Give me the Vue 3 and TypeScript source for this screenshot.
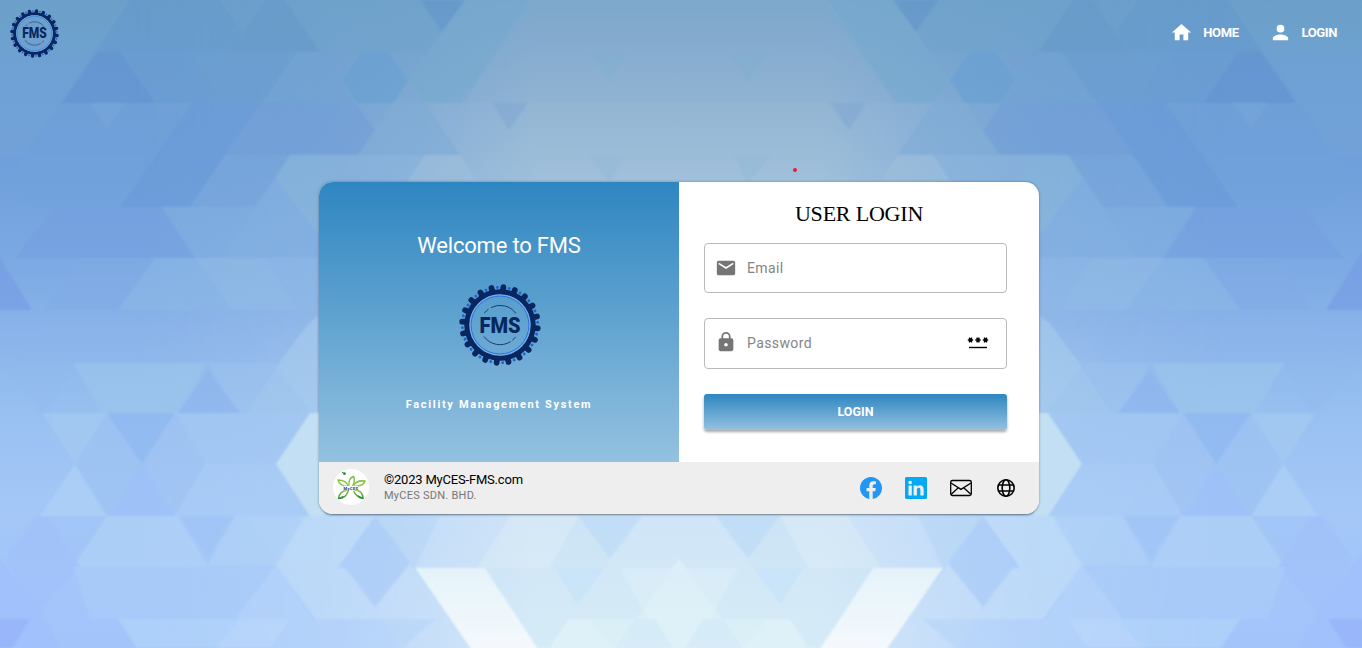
<script setup lang="ts">
import { ref } from 'vue'

interface Facet {
  p: string
  c: string
}

// Left half of the faceted backdrop; the right half is its mirror image.
const facets: Facet[] = [
  { p: '-10,0 130,0 25,155 -10,155', c: '#7ab4ca44' },
  { p: '-10,52 97,52 25,155 -10,155', c: '#6c9cda55' },
  { p: '130,0 220,0 243,35 232,52 97,52', c: '#5e96cb66' },
  { p: '220,0 265,0 243,35', c: '#6ca0cd' },
  { p: '265,0 285,0 320,52 232,52', c: '#6699c9' },
  { p: '285,0 420,0 442,32 428,52 320,52', c: '#6fa4cb' },
  { p: '420,0 465,0 442,32', c: '#6095ca' },
  { p: '465,0 535,0 462,103 425,103 408,80', c: '#78aacf' },
  { p: '408,80 465,0 428,52 388,52', c: '#75a6d0' },
  { p: '97,52 120,52 155,103 62,103', c: '#6292d0' },
  { p: '120,52 190,52 222,103 155,103', c: '#6a9cd2' },
  { p: '190,52 297,52 262,103 222,103', c: '#6b9dd0' },
  { p: '297,52 320,52 355,103 262,103', c: '#71a4d3' },
  { p: '362,52 388,52 408,80 393,103 357,103 342,80', c: '#66a0d2' },
  { p: '90,103 125,103 107,129', c: '#76a7d8' },
  { p: '125,103 193,103 167,140 107,129', c: '#70a1d7' },
  { p: '193,103 260,103 190,207 120,207', c: '#6a9ad9' },
  { p: '260,103 355,103 375,130 358,155 225,155', c: '#719fd7' },
  { p: '375,130 393,103 425,103 460,155 358,155', c: '#80add6' },
  { p: '425,103 690,103 690,182 478,182', c: '#9abbd755' },
  { p: '492,103 528,103 509,130', c: '#81a8d4' },
  { p: '590,52 628,52 610,82', c: '#80aed0' },
  { p: '587,155 625,155 610,182', c: '#93b8d7' },
  { p: '225,155 260,155 275,178 255,207 190,207', c: '#77a6dc' },
  { p: '260,155 290,155 275,178', c: '#76a6d8' },
  { p: '290,155 360,155 342,182 318,235 275,178', c: '#8ab8da' },
  { p: '327,155 425,155 407,182 342,182', c: '#8cb5dc' },
  { p: '425,155 460,155 478,182 407,182', c: '#9ec1db' },
  { p: '5,180 25,155 150,155 120,207 30,207', c: '#70a3dc66' },
  { p: '55,207 162,207 195,258 15,258', c: '#75a1e0' },
  { p: '162,207 255,207 220,258 195,258', c: '#80afe1' },
  { p: '275,178 318,235 318,258 220,258', c: '#84b1e0' },
  { p: '-10,245 0,258 32,310 -10,310', c: '#739ce4' },
  { p: '80,258 155,258 118,310 45,310', c: '#80ace5' },
  { p: '155,258 195,258 232,310 118,310', c: '#8ab7e6' },
  { p: '195,258 318,258 318,310 232,310', c: '#91bce6' },
  { p: '265,258 318,258 318,310 298,310', c: '#8fb8e7' },
  { p: '45,324 245,324 276,367 245,363 73,363 50,413 40,413 5,370', c: '#8cb7eb55' },
  { p: '73,363 207,363 178,413 103,413', c: '#9bc5eb' },
  { p: '208,363 276,363 248,413 240,413', c: '#9bc2ed' },
  { p: '208,370 240,413 178,413', c: '#8bb4ee' },
  { p: '308,324 318,316 318,413 248,413 276,367', c: '#a8ccee' },
  { p: '276,367 318,420 305,413 248,413', c: '#a2c8ee' },
  { p: '42,413 107,413 75,464', c: '#a7cbf1' },
  { p: '75,464 107,516 40,516', c: '#b0d2f5' },
  { p: '107,413 142,464 107,516 75,464', c: '#9dc3f2' },
  { p: '107,413 175,413 142,464', c: '#8cb6f0' },
  { p: '142,464 175,516 107,516', c: '#9bbff8' },
  { p: '142,464 175,413 205,464 175,516', c: '#a0c4f2' },
  { p: '175,413 310,413 276,464 205,464', c: '#a4c8f3' },
  { p: '205,464 276,464 310,516 175,516', c: '#a9cdf5' },
  { p: '48,516 107,516 73,567', c: '#a2c5f7' },
  { p: '107,516 178,516 208,567 73,567', c: '#b1d2f7' },
  { p: '178,516 235,516 208,558', c: '#9ec4f6' },
  { p: '235,516 248,516 276,565 208,565', c: '#b1d3f7' },
  { p: '35,516 48,516 80,567 40,610 5,560', c: '#a0c1fb' },
  { p: '-10,545 40,610 60,648 -10,648', c: '#9fbefc' },
  { p: '73,567 276,567 240,619 90,619', c: '#aacdf9' },
  { p: '276,565 313,619 383,619 403,648 213,648', c: '#b6d5fb' },
  { p: '-10,619 30,619 12,648 -10,648', c: '#91aff8' },
  { p: '118,619 240,619 213,648 137,648', c: '#b4d7fb' },
  { p: '240,619 290,619 270,648 215,648', c: '#bfdcfa' },
  { p: '248,516 305,516 276,565', c: '#b3d5f8' },
  { p: '305,516 375,516 338,568 345,568 383,619 315,619 276,565', c: '#c5e1f8' },
  { p: '375,516 410,562 375,607 348,568 338,568', c: '#acceF8' },
  { p: '375,516 440,516 410,562', c: '#bbdaf6' },
  { p: '440,516 510,516 477,568 415,568', c: '#cee2f8' },
  { p: '410,565 450,619 470,648 402,648 383,619 375,607', c: '#cae1f8' },
  { p: '383,619 435,619 403,648', c: '#bad7f9' },
  { p: '510,516 578,516 550,568 477,568', c: '#d9ebf6' },
  { p: '578,516 610,559 605,568 550,568', c: '#cbe4f5' },
  { p: '578,516 642,516 610,559', c: '#b8d9f7' },
  { p: '642,516 690,516 690,558 672,568 605,568', c: '#d0e6f7' },
  { p: '485,568 555,568 577,605 565,648 538,648', c: '#d0e7f7' },
  { p: '555,568 605,568 577,605', c: '#c2e0f8' },
  { p: '577,605 605,568 620,568 643,610 635,619 568,619', c: '#d1e7f6' },
  { p: '620,568 690,568 690,590 643,610', c: '#daeef7' },
  { p: '679,558 715,610 690,648 668,648 643,610', c: '#e1f3f8' },
  { p: '568,619 635,619 615,648 550,648', c: '#e0f2f8' },
  { p: '590,619 635,619 615,648', c: '#d9eff5' },
  { p: '635,619 655,619 673,648 615,648', c: '#d4e9f8' },
]

const teeth: number[] = Array.from({ length: 20 }, (_, i) => 5 + i * 18)

const email = ref<string>('')
const password = ref<string>('')
</script>

<template>
  <div class="page">
    <svg class="backdrop" viewBox="0 0 1362 648" preserveAspectRatio="none" aria-hidden="true">
      <defs>
        <linearGradient id="sky" x1="0" y1="0" x2="0" y2="1">
          <stop offset="0" stop-color="#699dca" />
          <stop offset=".16" stop-color="#6e9fd6" />
          <stop offset=".26" stop-color="#70a0db" />
          <stop offset=".39" stop-color="#7aa8e2" />
          <stop offset=".5" stop-color="#88b2e9" />
          <stop offset=".62" stop-color="#96bff0" />
          <stop offset=".77" stop-color="#a3c7f7" />
          <stop offset="1" stop-color="#a3c4fb" />
        </linearGradient>
        <linearGradient id="haze" x1="0" y1="0" x2="0" y2="1">
          <stop offset="0" stop-color="#7aa5ca" />
          <stop offset=".08" stop-color="#86accf" />
          <stop offset=".16" stop-color="#92b4d2" />
          <stop offset=".27" stop-color="#a1c0da" />
          <stop offset=".8" stop-color="#cfe5f6" />
          <stop offset="1" stop-color="#def1f8" />
        </linearGradient>
        <linearGradient id="fade" x1="0" y1="0" x2="1" y2="0">
          <stop offset=".2" stop-color="#000" />
          <stop offset=".46" stop-color="#333" />
          <stop offset=".62" stop-color="#8a8a8a" />
          <stop offset=".78" stop-color="#fff" />
        </linearGradient>
        <linearGradient id="beam" x1="0" y1="0" x2="0" y2="1">
          <stop offset="0" stop-color="#e4f3f9" />
          <stop offset="1" stop-color="#f5f9fd" />
        </linearGradient>
        <mask id="centre"><rect x="-10" width="700" height="648" fill="url(#fade)" /></mask>
        <filter id="soft" x="-2%" y="-2%" width="104%" height="104%"><feGaussianBlur stdDeviation=".8" /></filter>
        <clipPath id="half"><rect x="-10" width="690" height="648" /></clipPath>
        <g id="facets" clip-path="url(#half)">
          <rect x="-10" width="700" height="648" fill="url(#sky)" />
          <rect x="-10" width="700" height="648" fill="url(#haze)" mask="url(#centre)" />
          <g filter="url(#soft)">
            <g opacity=".62">
              <polygon v-for="(f, i) in facets" :key="i" :points="f.p" :fill="f.c" />
            </g>
            <polygon points="310,413 325,413 325,516 310,516 276,464" fill="#c2dff3" />
            <polygon points="415,568 485,568 538,650 472,650" fill="url(#beam)" />
            <polygon points="532,-4 694,-4 694,103 462,103" fill="#8db0d2" fill-opacity=".2" />
          </g>
        </g>
      </defs>
      <use href="#facets" />
      <use href="#facets" transform="translate(1358 0) scale(-1 1)" />
      <circle cx="795" cy="170" r="2" fill="#ed1c24" />
    </svg>

    <svg class="defs" aria-hidden="true">
      <symbol id="gear" viewBox="-50 -50 100 100">
        <g v-for="a in teeth" :key="a" :transform="`rotate(${a})`">
          <path d="M0-41V-46.3" stroke="#08265f" stroke-width="7" stroke-linecap="round" />
          <circle cx="0" cy="-46" r="1.8" fill="#1f63d2" transform="rotate(9)" />
        </g>
        <circle r="40.5" fill="none" stroke="#08265f" stroke-width="6.2" />
        <circle r="36" fill="none" stroke="#74aee8" stroke-width="2.4" />
        <circle r="35.3" fill="none" stroke="#2a6fdb" stroke-width="1.2" />
        <g fill="none" stroke="#173b70" stroke-width="1.2">
          <path d="M-19-14.500A24 24 0 0 1-14-19.500M-11-21.300A24 24 0 0 1 19.500-14" />
          <path d="M19 14.500A24 24 0 0 1 15 18.700M13 20.200A24 24 0 0 1-19.500 14" />
        </g>
      </symbol>
    </svg>

    <header class="bar">
      <svg class="brand" viewBox="-50 -50 100 100">
        <use href="#gear" x="-50" y="-50" width="100" height="100" />
        <text class="mono" x="0" y="10" text-anchor="middle" textLength="50" lengthAdjust="spacingAndGlyphs">FMS</text>
      </svg>
      <nav class="nav">
        <a class="link">
          <svg viewBox="0 0 24 24"><path d="M10 20v-6h4v6h5v-8h3L12 3 2 12h3v8z" /></svg>
          <span>HOME</span>
        </a>
        <a class="link">
          <svg viewBox="0 0 24 24"><path d="M12 12a4 4 0 1 0 0-8 4 4 0 0 0 0 8zm0 2c-2.670 0-8 1.340-8 4v2h16v-2c0-2.660-5.330-4-8-4z" /></svg>
          <span>LOGIN</span>
        </a>
      </nav>
    </header>

    <main class="card">
      <div class="panes">
        <section class="welcome">
          <h1>Welcome to FMS</h1>
          <svg class="emblem" viewBox="-50 -50 100 100">
            <use href="#gear" x="-50" y="-50" width="100" height="100" />
            <text class="mono" x="0" y="10" text-anchor="middle" textLength="50" lengthAdjust="spacingAndGlyphs">FMS</text>
          </svg>
          <p>Facility Management System</p>
        </section>
        <form class="login" @submit.prevent>
          <h2>USER LOGIN</h2>
          <label class="field">
            <svg viewBox="0 0 24 24"><path d="M20 4H4a2 2 0 0 0-2 2v12c0 1.100.9 2 2 2h16a2 2 0 0 0 2-2V6a2 2 0 0 0-2-2zm0 4-8 5-8-5V6l8 5 8-5z" /></svg>
            <input v-model="email" type="text" placeholder="Email" />
          </label>
          <label class="field second">
            <svg viewBox="0 0 24 24"><path d="M18 8h-1V6A5 5 0 0 0 7 6v2H6a2 2 0 0 0-2 2v10c0 1.100.9 2 2 2h12a2 2 0 0 0 2-2V10a2 2 0 0 0-2-2zm-6 9a2 2 0 1 1 0-4 2 2 0 0 1 0 4zM8.900 8V6a3.100 3.100 0 0 1 6.200 0v2z" /></svg>
            <input v-model="password" type="password" placeholder="Password" />
            <svg class="mask" viewBox="0 0 22 16" fill="none" stroke="#000">
              <path d="M2 13.500H20" stroke-width="1.400" />
              <g stroke-width="1.500">
                <path d="M.8 6h5.400M2.200 3.700l2.600 4.600M4.800 3.700l-2.600 4.600" />
                <path d="M8.300 6h5.400M9.700 3.700l2.600 4.600M12.300 3.700l-2.600 4.600" />
                <path d="M15.800 6h5.400M17.200 3.700l2.600 4.600M19.800 3.700l-2.600 4.600" />
              </g>
            </svg>
          </label>
          <button class="submit" type="submit">LOGIN</button>
        </form>
      </div>
      <footer class="foot">
        <svg class="avatar" viewBox="0 0 36 36">
          <defs>
            <linearGradient id="leaf" gradientUnits="userSpaceOnUse" x1="18" y1="5" x2="18" y2="31">
              <stop offset="0" stop-color="#7cbf3a" /><stop offset=".6" stop-color="#8fca4a" /><stop offset="1" stop-color="#2a8a3a" />
            </linearGradient>
          </defs>
          <circle cx="18" cy="18" r="18" fill="#fff" />
          <g fill="none" stroke="url(#leaf)" stroke-width="1.500" stroke-linejoin="round">
            <path d="M15.500 17.500C8 17 5.500 14 5 11 10 11 14 13 15.500 17.500z" />
            <path d="M16 17C15.500 12 17.500 8.500 20.500 7.500 22 10 21.500 14 19 17.500" />
            <path d="M20.500 17C22 13 27 11.500 32 12 31 15 28 17.500 20.500 17z" />
            <path d="M14.500 21C8.500 22 6 25 5.500 29.500 11 29.500 14 26 15.500 21.500" />
            <path d="M20.500 21.500C22 25.500 25 28.500 30 29.500 30 25 27.500 21.500 22 21" />
          </g>
          <g fill="#2e8b37">
            <path d="M5 29.800 7 29.800 11.500 27 9 27.300zM30.500 30 26.500 28.800 24.500 26 28.500 28z" />
            <circle cx="11.500" cy="4.700" r="1.400" /><circle cx="9.800" cy="3.500" r=".8" />
          </g>
          <rect x="11" y="16.800" width="14" height="4.400" fill="#fff" />
          <text x="18" y="20.500" text-anchor="middle" font-family="Roboto, sans-serif" font-weight="700" font-size="4"
            letter-spacing=".4" fill="#16385c">MyCES</text>
        </svg>
        <div class="owner">
          <strong>©2023 MyCES-FMS.com</strong>
          <span>MyCES SDN. BHD.</span>
        </div>
        <div class="social">
          <svg viewBox="0 0 16 16" fill="#2196f3"><path d="M16 8.049c0-4.446-3.582-8.050-8-8.050C3.580 0-.002 3.603-.002 8.050c0 4.017 2.926 7.347 6.750 7.951v-5.625h-2.030V8.050H6.750V6.275c0-2.017 1.195-3.131 3.022-3.131.876 0 1.791.157 1.791.157v1.980h-1.009c-.993 0-1.303.621-1.303 1.258v1.510h2.218l-.354 2.326H9.250V16c3.824-.604 6.750-3.934 6.750-7.951z" /></svg>
          <svg viewBox="0 0 16 16" fill="#03a9f4"><path d="M0 1.146C0 .513.526 0 1.175 0h13.650C15.474 0 16 .513 16 1.146v13.708c0 .633-.526 1.146-1.175 1.146H1.175C.526 16 0 15.487 0 14.854V1.146zm4.943 12.248V6.169H2.542v7.225h2.401zm-1.200-8.212c.837 0 1.358-.554 1.358-1.248-.015-.709-.520-1.248-1.342-1.248-.822 0-1.359.540-1.359 1.248 0 .694.521 1.248 1.327 1.248h.016zm4.908 8.212V9.359c0-.216.016-.432.080-.586.173-.431.568-.878 1.232-.878.869 0 1.216.662 1.216 1.634v3.865h2.401V9.250c0-2.220-1.184-3.252-2.764-3.252-1.274 0-1.845.700-2.165 1.193v.025h-.016a5.540 5.540 0 0 1 .016-.025V6.169h-2.400c.030.678 0 7.225 0 7.225h2.400z" /></svg>
          <svg viewBox="0 0 22 22" fill="none" stroke="#000" stroke-width="1.300"><rect x=".7" y="3.500" width="20.600" height="15" rx="1.800" /><path d="M1 6 11 12.400 21 6M1.200 17.200 8.300 10.800M20.800 17.200 13.700 10.800" /></svg>
          <svg viewBox="0 0 22 22" fill="none" stroke="#000" stroke-width="1.600"><circle cx="11" cy="11" r="8.200" /><ellipse cx="11" cy="11" rx="3.800" ry="8.200" /><path d="M3.500 8h15M3.500 14h15" /></svg>
        </div>
      </footer>
    </main>
  </div>
</template>

<style scoped>
.page {
  position: relative;
  width: 1362px;
  height: 648px;
  overflow: hidden;
  background: #8cb5e6;
  font-family: Roboto, sans-serif;
}
.backdrop {
  position: absolute;
  inset: 0;
  width: 100%;
  height: 100%;
}
.defs {
  position: absolute;
  width: 0;
  height: 0;
}
.mono {
  font: 900 28px Roboto, sans-serif;
  fill: #08265f;
}
.bar {
  position: relative;
  display: flex;
  align-items: center;
  justify-content: space-between;
  height: 66px;
  padding: 0 25px 0 10px;
  box-sizing: border-box;
}
.brand {
  width: 49px;
  height: 49px;
}
.nav {
  display: flex;
  gap: 30px;
  padding-bottom: 2px;
}
.link {
  display: flex;
  align-items: center;
  gap: 10px;
  color: #fff;
  font-size: 13px;
  font-weight: 700;
  letter-spacing: -0.4px;
}
.link svg {
  width: 23px;
  height: 23px;
  fill: #fff;
}
.card {
  position: relative;
  width: 720px;
  height: 332px;
  margin: 116px 0 0 319px;
  border-radius: 14px;
  overflow: hidden;
  box-shadow: 0 2px 2px -1px rgba(0, 0, 0, 0.35), 0 0 3px rgba(0, 0, 0, 0.3);
  background: #fff;
}
.panes {
  display: flex;
  height: 280px;
}
.welcome {
  display: flex;
  flex-direction: column;
  align-items: center;
  width: 360px;
  background: linear-gradient(#2e86c1, #94c1e0);
  color: #fff;
}
.welcome h1 {
  margin: 50px 0 0;
  font-size: 22px;
  font-weight: 400;
  line-height: 28px;
  letter-spacing: -0.2px;
  white-space: nowrap;
}
.emblem {
  width: 82px;
  height: 82px;
  margin: 24px 0 0 2px;
}
.welcome p {
  margin: 31px 0 0;
  font-size: 11px;
  font-weight: 700;
  line-height: 16px;
  letter-spacing: 1.66px;
  white-space: nowrap;
}
.login {
  display: flex;
  flex-direction: column;
  width: 360px;
  padding: 17px 32px 0 25px;
  box-sizing: border-box;
}
.login h2 {
  margin: 0 0 14px 7px;
  font-family: 'Liberation Serif', serif;
  font-size: 22px;
  font-weight: 400;
  line-height: 30px;
  letter-spacing: -0.2px;
  text-align: center;
  color: #000;
}
.field {
  display: flex;
  align-items: center;
  height: 50px;
  padding: 0 17px 0 10px;
  border: 1px solid #b9b9b9;
  border-radius: 4px;
  box-sizing: border-box;
}
.field.second {
  height: 51px;
  padding-bottom: 2px;
  margin: 25px 0;
}
.field svg {
  width: 22px;
  height: 22px;
  margin-bottom: 1px;
  fill: #757575;
  flex: none;
}
.field .mask {
  height: 16px;
  fill: none;
}
.field input {
  flex: 1;
  min-width: 0;
  margin-left: 10px;
  padding: 0;
  border: 0;
  outline: 0;
  background: none;
  font: 400 14px Roboto, sans-serif;
  letter-spacing: 0.4px;
}
.field input::placeholder {
  color: #858585;
  opacity: 1;
}
.submit {
  height: 36px;
  padding: 0 0 2px;
  border: 0;
  border-radius: 3px;
  background: linear-gradient(#2e86c1, #94c1e0);
  box-shadow: 0 2px 3px rgba(0, 0, 0, 0.35);
  color: #fff;
  font: 700 12.5px Roboto, sans-serif;
}
.foot {
  display: flex;
  align-items: center;
  height: 52px;
  padding: 0 22px 0 14px;
  box-sizing: border-box;
  background: #eee;
}
.avatar {
  width: 36px;
  height: 36px;
  margin-bottom: 2px;
}
.owner {
  display: flex;
  flex-direction: column;
  margin: 0 0 1px 15px;
}
.owner strong {
  font-size: 13px;
  font-weight: 400;
  line-height: 17px;
  letter-spacing: -0.2px;
  color: #000;
}
.owner span {
  font-size: 11px;
  line-height: 16px;
  letter-spacing: 0.25px;
  color: #777;
}
.social {
  display: flex;
  gap: 23px;
  margin-left: auto;
}
.social svg {
  width: 22px;
  height: 22px;
}
</style>

<style>
body {
  margin: 0;
  overflow: hidden;
}
</style>
